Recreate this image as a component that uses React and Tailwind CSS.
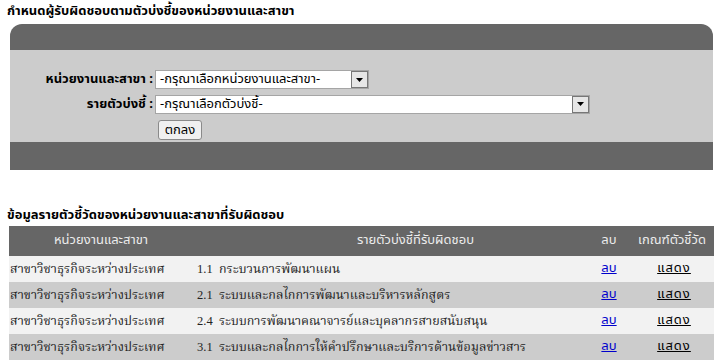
import React from "react";

const sans = { fontFamily: "Tahoma, 'Noto Sans Thai', 'Noto Sans', 'DejaVu Sans', sans-serif" };
const serif = { fontFamily: "'Liberation Serif', 'Noto Serif Thai', 'Noto Sans Thai', serif" };

function Arrow() {
  return (
    <div className="flex h-[17px] w-[17px] items-center justify-center border border-[#777] bg-[#e6e6e6]">
      <svg width="7" height="4" viewBox="0 0 7 4">
        <polygon points="0,0 7,0 3.5,4" fill="#000" />
      </svg>
    </div>
  );
}

function Select({ width, text }) {
  return (
    <div
      className={`flex h-[19px] items-center justify-between border border-[#a5a5a5] bg-white pl-[4px] ${width}`}
    >
      <span className="text-[13px] leading-none text-black">{text}</span>
      <Arrow />
    </div>
  );
}

const rows = [
  ["1.1", "กระบวนการพัฒนาแผน", "bg-[#f2f2f2]"],
  ["2.1", "ระบบและกลไกการพัฒนาและบริหารหลักสูตร", "bg-[#cccccc]"],
  ["2.4", "ระบบการพัฒนาคณาจารย์และบุคลากรสายสนับสนุน", "bg-[#f2f2f2]"],
  ["3.1", "ระบบและกลไกการให้คำปรึกษาและบริการด้านข้อมูลข่าวสาร", "bg-[#cccccc]"],
];

export default function App() {
  return (
    <div className="h-[361px] w-[724px] overflow-hidden bg-white text-black" style={sans}>
      <div className="pl-[7px] pt-[2px] text-[13px] font-bold leading-[18px]">
        กำหนดผู้รับผิดชอบตามตัวบ่งชี้ของหน่วยงานและสาขา
      </div>

      <div className="ml-[10px] mt-[4px] w-[703px]">
        <div className="h-[26px] rounded-t-[12px] bg-[#666666]" />
        <div className="flex h-[92px] flex-col gap-[5px] bg-[#cccccc] pt-[20px]">
          <div className="flex items-center">
            <div className="w-[145px] pr-[2px] text-right text-[13px] font-bold">หน่วยงานและสาขา :</div>
            <Select width="w-[214px]" text="-กรุณาเลือกหน่วยงานและสาขา-" />
          </div>
          <div className="flex items-center">
            <div className="w-[145px] pr-[2px] text-right text-[13px] font-bold">รายตัวบ่งชี้ :</div>
            <Select width="w-[435px]" text="-กรุณาเลือกตัวบ่งชี้-" />
          </div>
          <div className="flex pl-[148px] pt-[1px]">
            <button
              className="flex h-[20px] w-[44px] items-center justify-center rounded-[3px] border border-[#8a8a8a] bg-[#f0f0f0] text-[13px] leading-none"
              style={sans}
            >
              ตกลง
            </button>
          </div>
        </div>
        <div className="h-[28px] bg-[#666666]" />
      </div>

      <div className="mt-[36px] pl-[7px] text-[13px] font-bold leading-[18px]">
        ข้อมูลรายตัวชี้วัดของหน่วยงานและสาขาที่รับผิดชอบ
      </div>

      <div className="ml-[9px] mt-[2px] w-[705px]">
        <div className="grid h-[30px] grid-cols-[184px_395px_42px_84px] items-center bg-[#666666] text-[13px] text-[#ececec]">
          <div className="text-center">หน่วยงานและสาขา</div>
          <div className="pl-[50px] text-center">รายตัวบ่งชี้ที่รับผิดชอบ</div>
          <div className="text-center">ลบ</div>
          <div className="text-center">เกณฑ์ตัวชี้วัด</div>
        </div>
        {rows.map(([num, name, bg]) => (
          <div
            key={num}
            className={`grid h-[26px] grid-cols-[184px_395px_42px_84px] items-center ${bg}`}
          >
            <div className="pl-[1px] text-[12.5px] text-[#222]" style={serif}>
              สาขาวิชาธุรกิจระหว่างประเทศ
            </div>
            <div className="pl-[4px] text-[12.5px] text-[#222]" style={serif}>
              {num}&nbsp;&nbsp;{name}
            </div>
            <div className="text-center text-[13px]">
              <a href="#" className="text-[#0000cc] underline">ลบ</a>
            </div>
            <div className="pl-[4px] text-center text-[13px]">
              <a href="#" className="tracking-[1px] text-black underline">แสดง</a>
            </div>
          </div>
        ))}
      </div>
    </div>
  );
}
